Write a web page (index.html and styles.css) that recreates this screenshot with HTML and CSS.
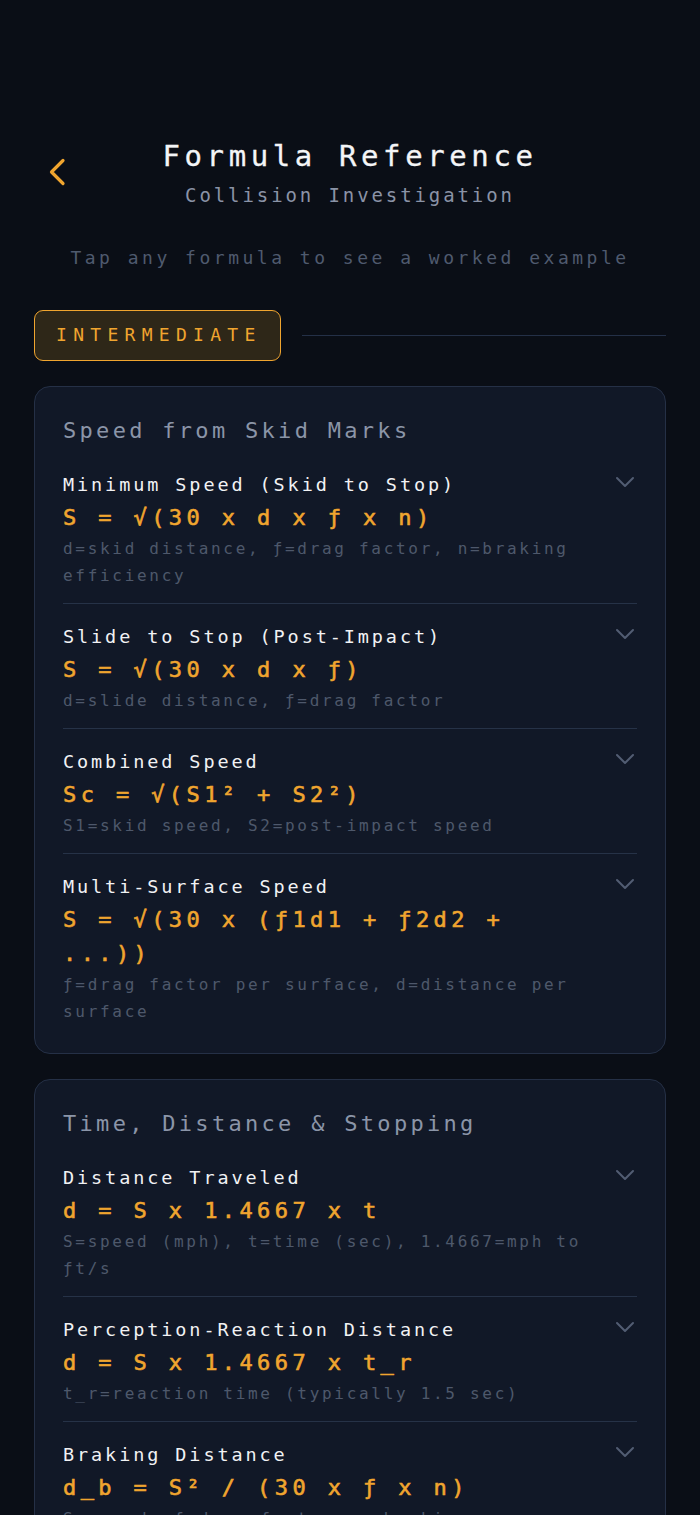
FILE: index.html
```html
<!DOCTYPE html>
<html lang="en">
<head>
<meta charset="utf-8">
<title>Formula Reference</title>
<link rel="stylesheet" href="styles.css">
</head>
<body>
<div class="page">
  <header class="header">
    <button class="back" aria-label="Back">
      <svg width="18" height="28" viewBox="0 0 18 28"><path d="M15 2.5 L3.5 14 L15 25.5" fill="none" stroke="#f0a52f" stroke-width="3.2" stroke-linecap="round" stroke-linejoin="round"/></svg>
    </button>
    <div class="titles">
      <h1 class="title">Formula Reference</h1>
      <div class="subtitle">Collision Investigation</div>
    </div>
  </header>
  <p class="hint">Tap any formula to see a worked example</p>

  <div class="level">
    <span class="badge">INTERMEDIATE</span>
    <span class="rule"></span>
  </div>

  <section class="card">
    <h2 class="section">Speed from Skid Marks</h2>
    <div class="item">
      <div class="item-text">
        <div class="name">Minimum Speed (Skid to Stop)</div>
        <div class="formula">S = √(30 x d x ƒ x n)</div>
        <div class="desc">d=skid distance, ƒ=drag factor, n=braking efficiency</div>
      </div>
      <svg class="chev" width="20" height="12" viewBox="0 0 20 12"><path d="M2 2 L10 10 L18 2" /></svg>
    </div>
    <div class="item">
      <div class="item-text">
        <div class="name">Slide to Stop (Post-Impact)</div>
        <div class="formula">S = √(30 x d x ƒ)</div>
        <div class="desc">d=slide distance, ƒ=drag factor</div>
      </div>
      <svg class="chev" width="20" height="12" viewBox="0 0 20 12"><path d="M2 2 L10 10 L18 2" /></svg>
    </div>
    <div class="item">
      <div class="item-text">
        <div class="name">Combined Speed</div>
        <div class="formula">Sc = √(S1² + S2²)</div>
        <div class="desc">S1=skid speed, S2=post-impact speed</div>
      </div>
      <svg class="chev" width="20" height="12" viewBox="0 0 20 12"><path d="M2 2 L10 10 L18 2" /></svg>
    </div>
    <div class="item">
      <div class="item-text">
        <div class="name">Multi-Surface Speed</div>
        <div class="formula">S = √(30 x (ƒ1d1 + ƒ2d2 + ...))</div>
        <div class="desc">ƒ=drag factor per surface, d=distance per surface</div>
      </div>
      <svg class="chev" width="20" height="12" viewBox="0 0 20 12"><path d="M2 2 L10 10 L18 2" /></svg>
    </div>
  </section>

  <section class="card">
    <h2 class="section">Time, Distance &amp; Stopping</h2>
    <div class="item">
      <div class="item-text">
        <div class="name">Distance Traveled</div>
        <div class="formula">d = S x 1.4667 x t</div>
        <div class="desc">S=speed (mph), t=time (sec), 1.4667=mph to ƒt/s</div>
      </div>
      <svg class="chev" width="20" height="12" viewBox="0 0 20 12"><path d="M2 2 L10 10 L18 2" /></svg>
    </div>
    <div class="item">
      <div class="item-text">
        <div class="name">Perception-Reaction Distance</div>
        <div class="formula">d = S x 1.4667 x t_r</div>
        <div class="desc">t_r=reaction time (typically 1.5 sec)</div>
      </div>
      <svg class="chev" width="20" height="12" viewBox="0 0 20 12"><path d="M2 2 L10 10 L18 2" /></svg>
    </div>
    <div class="item">
      <div class="item-text">
        <div class="name">Braking Distance</div>
        <div class="formula">d_b = S² / (30 x ƒ x n)</div>
        <div class="desc">S=speed, ƒ=drag factor, n=braking efficiency</div>
      </div>
      <svg class="chev" width="20" height="12" viewBox="0 0 20 12"><path d="M2 2 L10 10 L18 2" /></svg>
    </div>
  </section>
</div>
</body>
</html>
```

FILE: styles.css
```css
* { box-sizing: border-box; }
html, body { margin: 0; padding: 0; }
body {
  background: #0a0e16;
  font-family: "DejaVu Sans Mono", "Liberation Mono", monospace;
  color: #e8eaee;
  height: 1515px;
  overflow: hidden;
}
.page {
  padding: 138px 34px 0 34px;
}
.header {
  position: relative;
  display: flex;
  justify-content: center;
}
.back {
  position: absolute;
  left: 14px;
  top: 20px;
  background: none;
  border: 0;
  padding: 0;
  width: 18px;
  height: 28px;
}
.back svg { display: block; }
.titles { text-align: center; }
.title {
  margin: 0;
  font-size: 29px;
  line-height: 36px;
  font-weight: 400;
  letter-spacing: 4.6px;
  color: #f4f5f7;
  -webkit-text-stroke: 0.3px #f4f5f7;
}
.subtitle {
  margin-top: 9px;
  font-size: 19px;
  line-height: 24px;
  letter-spacing: 2.9px;
  color: #8a93a6;
}
.hint {
  margin: 39px 0 0 0;
  text-align: center;
  font-size: 18px;
  line-height: 24px;
  letter-spacing: 3.5px;
  color: #4f5a6e;
}
.level {
  margin-top: 40px;
  display: flex;
  align-items: center;
  gap: 21px;
}
.badge {
  display: inline-block;
  height: 51px;
  padding: 0 18px 0 21px;
  line-height: 48px;
  border: 1.5px solid #f0a52f;
  border-radius: 9px;
  background: #2e2718;
  color: #f0a52f;
  font-size: 18px;
  letter-spacing: 6.3px;
}
.rule {
  flex: 1;
  height: 1.5px;
  background: #243047;
}
.card {
  margin-top: 25px;
  background: #111827;
  border: 1.5px solid #253046;
  border-radius: 16px;
  padding: 30px 28px 14px 28px;
}
.section {
  margin: 0 0 7px 0;
  font-size: 22px;
  line-height: 28px;
  font-weight: 400;
  letter-spacing: 3.3px;
  color: #8b95a8;
}
.item {
  display: flex;
  align-items: flex-start;
  gap: 12px;
  padding: 19px 0 14px 0;
  border-bottom: 1.5px solid #263247;
}
.item:last-child { border-bottom: 0; }
.item-text { flex: 1; min-width: 0; }
.name {
  font-size: 18.5px;
  line-height: 27px;
  letter-spacing: 2.9px;
  color: #f1f2f4;
}
.formula {
  margin-top: 3px;
  font-size: 22px;
  line-height: 34px;
  font-weight: 400;
  letter-spacing: 4.4px;
  color: #f0a52f;
  -webkit-text-stroke: 0.6px #f0a52f;
}
.desc {
  margin-top: 0;
  font-size: 16px;
  line-height: 27px;
  letter-spacing: 2.7px;
  color: #4e586b;
}
.chev {
  flex: none;
  margin-top: 5px;
  margin-right: 2px;
}
.chev path {
  fill: none;
  stroke: #525d73;
  stroke-width: 2;
  stroke-linecap: round;
  stroke-linejoin: round;
}
```
